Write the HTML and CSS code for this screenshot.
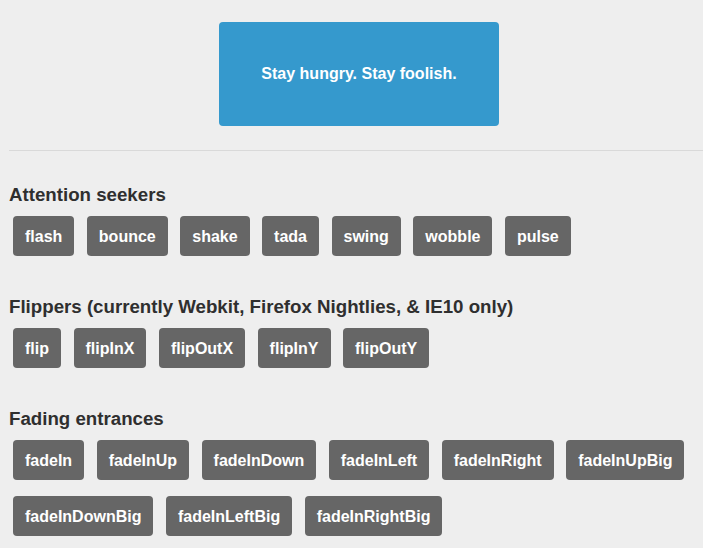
FILE: index.html
```html
<!DOCTYPE html>
<html>
<head>
<meta charset="utf-8">
<link rel="stylesheet" href="styles.css">
</head>
<body>
<div class="page">
  <header class="hero-wrap">
    <div class="hero">Stay hungry. Stay foolish.</div>
  </header>
  <hr class="rule">
  <section class="group first">
    <h2 class="title">Attention seekers</h2>
    <div class="buttons">
      <span class="btn">flash</span>
      <span class="btn">bounce</span>
      <span class="btn">shake</span>
      <span class="btn">tada</span>
      <span class="btn">swing</span>
      <span class="btn">wobble</span>
      <span class="btn">pulse</span>
    </div>
  </section>
  <section class="group">
    <h2 class="title">Flippers (currently Webkit, Firefox Nightlies, &amp; IE10 only)</h2>
    <div class="buttons">
      <span class="btn">flip</span>
      <span class="btn">flipInX</span>
      <span class="btn">flipOutX</span>
      <span class="btn">flipInY</span>
      <span class="btn">flipOutY</span>
    </div>
  </section>
  <section class="group">
    <h2 class="title">Fading entrances</h2>
    <div class="buttons">
      <span class="btn">fadeIn</span>
      <span class="btn">fadeInUp</span>
      <span class="btn">fadeInDown</span>
      <span class="btn">fadeInLeft</span>
      <span class="btn">fadeInRight</span>
      <span class="btn">fadeInUpBig</span>
      <span class="btn">fadeInDownBig</span>
      <span class="btn">fadeInLeftBig</span>
      <span class="btn">fadeInRightBig</span>
    </div>
  </section>
</div>
</body>
</html>
```
FILE: styles.css
```css
html, body {
  margin: 0;
  padding: 0;
  background: #eeeeee;
}
body {
  font-family: "Liberation Sans", Arial, sans-serif;
  overflow: hidden;
}
.page {
  padding: 22px 0 0 9px;
}
.hero-wrap {
  display: flex;
  padding-left: 210px;
}
.hero {
  width: 280px;
  height: 104px;
  background: #3599cd;
  border-radius: 4px;
  color: #ffffff;
  font-weight: bold;
  font-size: 16px;
  display: flex;
  align-items: center;
  justify-content: center;
}
.rule {
  margin: 24px 0 0 0;
  border: 0;
  border-top: 1px solid #d9d9d9;
  height: 0;
}
.group {
  margin-top: 40px;
}
.group.first {
  margin-top: 33px;
}
.title {
  margin: 0 0 11px 0;
  font-size: 18.7px;
  line-height: 21px;
  font-weight: bold;
  color: #2f2f2f;
}
.buttons {
  display: flex;
  flex-wrap: wrap;
  gap: 16px 12.5px;
  padding-left: 4px;
}
.btn {
  display: block;
  background: #666666;
  color: #ffffff;
  font-weight: bold;
  font-size: 16px;
  line-height: 20px;
  padding: 11px 12px 9px;
  border-radius: 4px;
}
```
